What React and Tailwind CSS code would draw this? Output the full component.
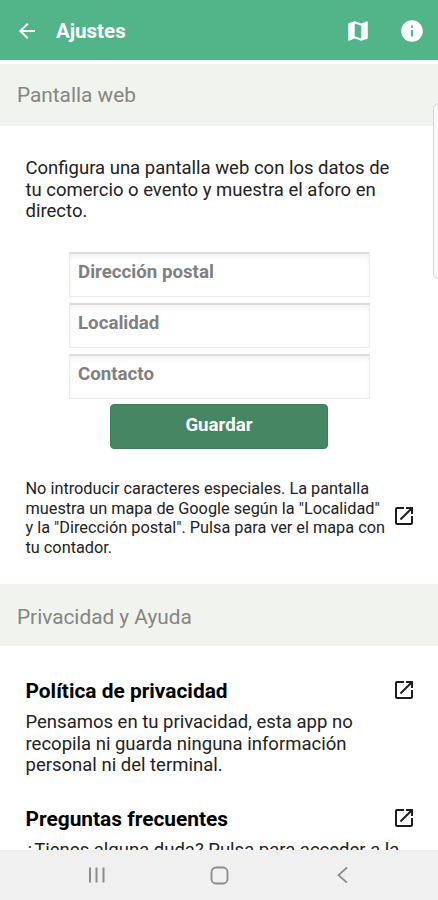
import React from 'react';
import { MdArrowBack, MdInfo, MdMap, MdOpenInNew } from 'react-icons/md';

const FIELDS = ['Dirección postal', 'Localidad', 'Contacto'];

const SectionHeader = ({ children }) => (
    <h2 className="h-[62px] shrink-0 bg-[#f0f4ec] px-[17px] text-[20.8px] leading-[63px] text-[#858585]">
        {children}
    </h2>
);

const Header = () => (
    <header className="flex h-[60px] shrink-0 items-center bg-[#52b58a] pt-[2px] pr-[13px] pl-[15px] text-white">
        <button aria-label="Volver">
            <MdArrowBack className="size-6" />
        </button>
        <h1 className="ml-[17px] flex-1 text-[20.5px] font-bold">Ajustes</h1>
        <button aria-label="Mapa">
            <MdMap className="size-[26px]" />
        </button>
        <button aria-label="Información" className="ml-[28px]">
            <MdInfo className="size-[26px]" />
        </button>
    </header>
);

const LinkItem = ({ title, children }) => (
    <article>
        <div className="flex h-6 items-center justify-between">
            <h3 className="pt-[2px] text-[20.9px] leading-6 font-bold">{title}</h3>
            <MdOpenInNew className="size-6 text-[#1c1c1c]" />
        </div>
        <p className="mt-[10px] text-[18.5px] leading-[21.7px] whitespace-nowrap text-[#222]">{children}</p>
    </article>
);

const NavBar = () => (
    <nav className="flex h-[50px] shrink-0 items-center bg-[#f0f0f0] text-[#8c8c8c]">
        <svg className="ml-[87px] h-5 w-5" viewBox="0 0 20 20" fill="none" stroke="currentColor" strokeWidth="2">
            <path d="M3 2.5v15M9.5 2.5v15M16.5 2.5v15" />
        </svg>
        <svg className="ml-[102px] h-5 w-5" viewBox="0 0 20 20" fill="none" stroke="currentColor" strokeWidth="1.8">
            <rect x="2.5" y="2.5" width="16" height="16" rx="4.5" />
        </svg>
        <svg className="ml-[103px] h-5 w-5" viewBox="0 0 20 20" fill="none" stroke="currentColor" strokeWidth="1.8">
            <path d="M15 2.5L6.5 10.2l8.5 7.5" />
        </svg>
    </nav>
);

const App = () => {
    return (
        <div className="relative flex h-[900px] w-[438px] flex-col overflow-hidden bg-white font-[Roboto,sans-serif] text-black">
            <Header />

            <main className="flex min-h-0 flex-1 flex-col overflow-hidden pt-1">
                <SectionHeader>Pantalla web</SectionHeader>
                <section className="h-[458px] shrink-0 pt-[32px] pr-[22px] pl-[25.5px]">
                    <p className="text-[18.5px] leading-[21.7px] whitespace-nowrap text-[#222]">
                        Configura una pantalla web con los datos de<br />
                        tu comercio o evento y muestra el aforo en<br />
                        directo.
                    </p>

                    <form className="mt-[29px] ml-[43.5px] flex w-[301px] flex-col gap-[6px]">
                        {FIELDS.map((field) => (
                            <input
                                key={field}
                                placeholder={field}
                                className="h-[45px] border border-t-2 border-[#ececec] border-t-[#dcdcdc] px-[8px] pb-[7px] text-[18.7px] font-bold shadow-[inset_0_3px_4px_#f3f3f3] placeholder:text-[#808080] placeholder:opacity-100"
                            />
                        ))}
                        <button
                            type="button"
                            className="-mt-px ml-[41px] h-[45px] w-[218px] rounded-[4px] border border-[#3d7d5d] bg-[#478663] pb-[4px] text-[18.7px] font-bold text-white"
                        >
                            Guardar
                        </button>
                    </form>

                    <div className="mt-[30px] flex items-start justify-between">
                        <p className="text-[16.3px] leading-[19.5px] whitespace-nowrap text-[#222]">
                            No introducir caracteres especiales. La pantalla<br />
                            muestra un mapa de Google según la "Localidad"<br />
                            y la "Dirección postal". Pulsa para ver el mapa con<br />
                            tu contador.
                        </p>
                        <MdOpenInNew className="mt-[25px] size-6 shrink-0 text-[#1c1c1c]" />
                    </div>
                </section>

                <SectionHeader>
                    <span className="block pt-[2px]">Privacidad y Ayuda</span>
                </SectionHeader>
                <section className="flex shrink-0 flex-col gap-[28.5px] pt-[32px] pr-[22px] pl-[25.5px]">
                    <LinkItem title="Política de privacidad">
                        Pensamos en tu privacidad, esta app no<br />
                        recopila ni guarda ninguna información<br />
                        personal ni del terminal.
                    </LinkItem>
                    <LinkItem title="Preguntas frecuentes">¿Tienes alguna duda? Pulsa para acceder a la</LinkItem>
                </section>
            </main>

            <NavBar />

            {/* Edge panel handle */}
            <div className="absolute top-[103px] -right-[6px] h-[176px] w-[11px] rounded-[6px] border border-[#d4d4d4] bg-[#fafafa]" />
        </div>
    );
};

export default App;
